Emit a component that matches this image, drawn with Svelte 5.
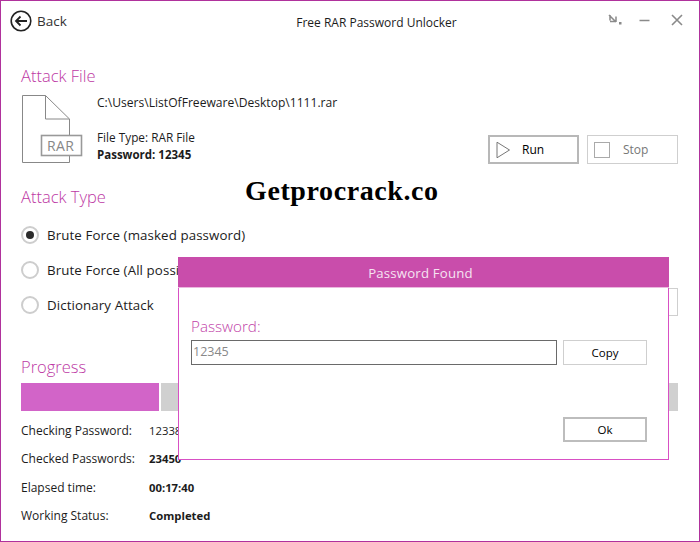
<script>
  const attackTypes = [
    { label: 'Brute Force (masked password)', checked: true },
    { label: 'Brute Force (All possible combinations)', checked: false },
    { label: 'Dictionary Attack', checked: false }
  ];

  const stats = [
    { label: 'Checking Password:', value: '12338', bold: false },
    { label: 'Checked Passwords:', value: '23450', bold: true },
    { label: 'Elapsed time:', value: '00:17:40', bold: true },
    { label: 'Working Status:', value: 'Completed', bold: true }
  ];

  const progress = 21;
</script>

<div class="window">
  <header class="titlebar">
    <div class="back">
      <svg width="22" height="22" viewBox="0 0 22 22" fill="none" stroke="#222">
        <circle cx="11" cy="11" r="9.8" stroke-width="1.6" />
        <path d="M17 11H6M10.5 6.5 6 11l4.500 4.500" stroke-width="1.8" />
      </svg>
      <span>Back</span>
    </div>
    <div class="title">Free RAR Password Unlocker</div>
    <div class="controls">
      <svg width="14" height="12" viewBox="0 0 14 12" fill="none" stroke="#8a8a8a">
        <path d="M1 1l7 7M2 6.500V1M2 7.500h6M8 2.500V8" stroke-width="1.500" />
        <rect x="11" y="8" width="2.500" height="2.500" fill="#8a8a8a" stroke="none" />
      </svg>
      <svg class="minimize" width="11" height="12" viewBox="0 0 11 12" stroke="#8a8a8a">
        <path d="M0.500 6.500h10" stroke-width="1.500" />
      </svg>
      <svg width="12" height="12" viewBox="0 0 12 12" stroke="#8a8a8a">
        <path d="M1 1l10 10M11 1 1 11" stroke-width="1.600" />
      </svg>
    </div>
  </header>

  <section class="file-section">
    <h2>Attack File</h2>
    <div class="file-row">
      <svg class="file-icon" width="62" height="68" viewBox="0 0 62 68" fill="none">
        <path d="M1.500 .5H24.500L48.500 24V67.500H1.500Z M24.500 .5V24H48.500" stroke="#888" />
        <rect x="20.500" y="40.500" width="40" height="20" fill="#fff" stroke="#999" stroke-width="1.600" />
        <text x="26" y="56" class="rar">RAR</text>
      </svg>
      <div class="file-info">
        <div class="path">C:\Users\ListOfFreeware\Desktop\1111.rar</div>
        <div class="type">File Type: RAR File</div>
        <div class="pass">Password: 12345</div>
      </div>
      <div class="actions">
        <button class="action run">
          <svg width="15" height="18" viewBox="0 0 15 18" fill="none" stroke="#777">
            <path d="M1 1.200 13.500 9 1 16.800Z" />
          </svg>
          <span>Run</span>
        </button>
        <button class="action stop">
          <svg width="16" height="16" viewBox="0 0 16 16" fill="none" stroke="#aaa">
            <rect x=".5" y=".5" width="15" height="15" />
          </svg>
          <span>Stop</span>
        </button>
      </div>
    </div>
  </section>

  <section class="type-section">
    <h2>Attack Type</h2>
    <div class="type-body">
      <div class="radios">
        {#each attackTypes as t}
          <div class="radio-row">
            <span class="radio" class:checked={t.checked}></span>
            <span>{t.label}</span>
          </div>
        {/each}
      </div>
      <div class="dict-field"></div>
    </div>
  </section>

  <section class="progress-section">
    <h2>Progress</h2>
    <div class="bar">
      <div class="fill" style="width: {progress}%"></div>
    </div>
    <div class="stats">
      {#each stats as s}
        <div class="stat">
          <span class="stat-label">{s.label}</span>
          <span class="stat-value" class:bold={s.bold}>{s.value}</span>
        </div>
      {/each}
    </div>
  </section>

  <div class="watermark">Getprocrack.co</div>

  <div class="dialog">
    <div class="dialog-head">Password Found</div>
    <div class="dialog-body">
      <label for="found">Password:</label>
      <div class="found-row">
        <input id="found" value="12345" readonly />
        <button class="dlg-btn">Copy</button>
      </div>
      <div class="ok-row">
        <button class="dlg-btn ok">Ok</button>
      </div>
    </div>
  </div>
</div>

<style>
  :global(body) {
    margin: 0;
    background: #fff;
  }

  .window {
    position: relative;
    box-sizing: border-box;
    width: 700px;
    height: 542px;
    border: 1px solid #b0329c;
    background: #fff;
    color: #1c1c1c;
    font-family: "Open Sans", "Noto Sans", sans-serif;
    font-size: 12px;
    overflow: hidden;
  }

  .titlebar {
    display: grid;
    grid-template-columns: 1fr auto 1fr;
    align-items: center;
    height: 40px;
    padding: 0 16px 0 9px;
  }

  .back {
    display: flex;
    align-items: center;
    gap: 5px;
    font-size: 13.500px;
    color: #333;
  }

  .title {
    font-size: 12px;
    margin-left: 60px;
    padding-top: 2px;
  }

  .controls {
    display: flex;
    justify-content: flex-end;
    align-items: center;
    gap: 17px;
    margin-top: -3px;
  }

  .minimize {
    margin-right: 4px;
  }

  h2 {
    margin: 0;
    font-size: 16.500px;
    font-weight: 300;
    line-height: 22px;
    color: #bd38a4;
  }

  .file-section {
    padding: 24px 21px 0 20px;
  }

  .file-row {
    display: flex;
    margin-top: 8px;
    height: 70px;
  }

  .file-icon {
    flex: none;
    margin-right: -2px;
  }

  .rar {
    font-size: 14px;
    fill: #888;
    letter-spacing: .4px;
  }

  .file-info {
    margin-left: 16px;
    width: 392px;
    font-size: 12.100px;
    line-height: 17px;
  }

  .path {
    margin-bottom: 18px;
    margin-top: -1px;
  }

  .type {
    font-size: 11.800px;
  }

  .pass {
    font-size: 11.500px;
    font-weight: 700;
  }

  .actions {
    display: flex;
    gap: 8px;
    align-self: flex-end;
    margin-bottom: 1px;
  }

  .action {
    display: flex;
    align-items: center;
    box-sizing: border-box;
    width: 91px;
    height: 29px;
    padding: 0 0 0 6px;
    background: #fff;
    font: inherit;
    font-size: 12px;
    cursor: pointer;
  }

  .run {
    border: 2px solid #b8b8b8;
    font-weight: 500;
  }

  .run span {
    margin-left: 11px;
  }

  .stop {
    border: 1px solid #cfcfcf;
    color: #777;
  }

  .stop span {
    margin-left: 13px;
  }

  .type-section {
    padding: 21px 21px 0 20px;
  }

  .type-body {
    display: flex;
    justify-content: space-between;
    align-items: flex-end;
  }

  .radios {
    display: flex;
    flex-direction: column;
    gap: 12px;
    margin-top: 15px;
  }

  .radio-row {
    display: flex;
    align-items: center;
    gap: 8px;
    height: 23px;
    font-size: 13.300px;
    letter-spacing: .1px;
  }

  .radio {
    display: grid;
    place-items: center;
    box-sizing: border-box;
    width: 18px;
    height: 18px;
    border: 2px solid #cdcdcd;
    border-radius: 50%;
  }

  .radio.checked::after {
    content: "";
    width: 8px;
    height: 8px;
    border-radius: 50%;
    background: #2b2b2b;
  }

  .dict-field {
    box-sizing: border-box;
    width: 100px;
    height: 28px;
    border: 1px solid #cfcfcf;
  }

  .progress-section {
    padding: 40px 21px 0 20px;
  }

  .bar {
    display: flex;
    height: 28px;
    margin-top: 5px;
    background: #d0d0d0;
  }

  .fill {
    background: #d264c8;
    border-right: 2px solid #fff;
  }

  .stats {
    margin-top: 5px;
  }

  .stat {
    display: flex;
    align-items: center;
    height: 28.500px;
    font-size: 12px;
  }

  .stat-label {
    width: 128px;
    flex: none;
  }

  .stat-value {
    font-size: 11.300px;
  }

  .bold {
    font-weight: 700;
  }

  .watermark {
    position: absolute;
    left: 244px;
    top: 174px;
    font-family: "Liberation Serif", serif;
    font-weight: 700;
    font-size: 28px;
    letter-spacing: .6px;
    color: #000;
  }

  .dialog {
    position: absolute;
    left: 177px;
    top: 256px;
    box-sizing: border-box;
    width: 491px;
    height: 203px;
    border: 1px solid #d850c4;
    background: #fff;
  }

  .dialog-head {
    height: 30px;
    margin: -1px -1px 0;
    padding-right: 6px;
    background: #c94dab;
    border-bottom: 1px solid #eab8de;
    color: #f6e4f2;
    font-size: 13.200px;
    line-height: 32px;
    text-align: center;
    letter-spacing: .2px;
  }

  .dialog-body {
    padding: 28px 21px 0 12px;
  }

  label {
    display: block;
    font-size: 15.200px;
    font-weight: 300;
    line-height: 21px;
    color: #c13fa8;
  }

  .found-row {
    display: flex;
    gap: 6px;
    margin-top: 3px;
  }

  input {
    box-sizing: border-box;
    width: 366px;
    height: 25px;
    padding: 0 1px 3px;
    border: 1px solid #6a6a6a;
    outline: none;
    font: inherit;
    font-size: 12.500px;
    color: #888;
  }

  .dlg-btn {
    box-sizing: border-box;
    width: 84px;
    height: 25px;
    padding: 0;
    border: 1px solid #cfcfcf;
    background: #fff;
    font: inherit;
    font-size: 11.500px;
    font-weight: 500;
    cursor: pointer;
  }

  .ok-row {
    display: flex;
    justify-content: flex-end;
    margin-top: 52px;
  }

  .ok {
    border: 2px solid #bdbdbd;
  }
</style>
